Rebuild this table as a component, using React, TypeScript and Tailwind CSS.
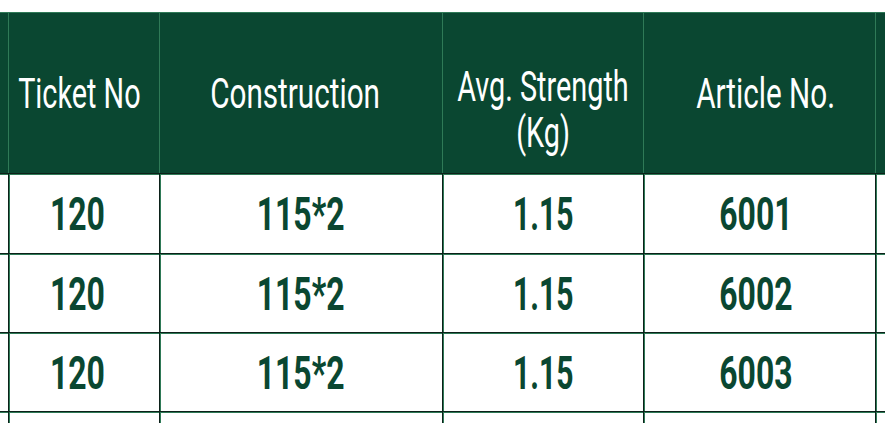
import React from "react";

const cols = "grid-cols-[8px_151px_283px_201px_232px_1fr]";

function HCell({ children, className = "" }: { children?: React.ReactNode; className?: string }) {
  return (
    <div className={`flex items-center justify-center border-l border-[#2f7a57] text-white ${className}`}>
      {children}
    </div>
  );
}

function Cond({ children, className = "" }: { children: React.ReactNode; className?: string }) {
  return <span className={`inline-block whitespace-nowrap ${className}`}>{children}</span>;
}

const rows = [
  ["120", "115*2", "1.15", "6001"],
  ["120", "115*2", "1.15", "6002"],
  ["120", "115*2", "1.15", "6003"],
];

export default function App() {
  return (
    <div className="w-[885px] h-[423px] overflow-hidden bg-white pt-[12px] font-['Roboto',sans-serif]">
      <div className={`grid ${cols} h-[161px] bg-[#0a4731] border-t border-[#2f7a57]`}>
        <div />
        <HCell className="pr-[9px]">
          <Cond className="text-[43px] font-normal leading-none scale-x-[0.67]">Ticket No</Cond>
        </HCell>
        <HCell className="pr-[11px]">
          <Cond className="text-[43px] font-normal leading-none scale-x-[0.69]">Construction</Cond>
        </HCell>
        <HCell>
          <div className="flex flex-col items-center text-[43px] leading-[46px] mt-[32px]">
            <Cond className="scale-x-[0.67]">Avg. Strength</Cond>
            <Cond className="scale-x-[0.67]">(Kg)</Cond>
          </div>
        </HCell>
        <HCell className="pl-[12px]">
          <Cond className="text-[43px] font-normal leading-none scale-x-[0.69]">Article No.</Cond>
        </HCell>
        <HCell />
      </div>
      {rows.map((r, i) => (
        <div
          key={i}
          className={`grid ${cols} ${i === 0 ? "h-[80px]" : "h-[79px]"} border-t border-[#0c2119] shadow-[inset_0_1px_0_#2f7a57]`}
        >
          <div />
          {r.map((v, j) => (
            <div
              key={j}
              className={`flex items-center justify-center border-l border-[#0c2119] shadow-[inset_1px_0_0_#2f7a57] text-[#0a4731] ${
                j === 0 ? "pr-[13px]" : j === 3 ? "pr-[8px]" : ""
              }`}
            >
              <Cond className={`text-[47px] font-bold leading-none ${j === 2 ? "scale-x-[0.64]" : "scale-x-[0.68]"}`}>{v}</Cond>
            </div>
          ))}
          <div className="border-l border-[#0c2119] shadow-[inset_1px_0_0_#2f7a57]" />
        </div>
      ))}
      <div className={`grid ${cols} h-[20px] border-t border-[#0c2119] shadow-[inset_0_1px_0_#2f7a57]`}>
        <div />
        <div className="border-l border-[#0c2119] shadow-[inset_1px_0_0_#2f7a57]" />
        <div className="border-l border-[#0c2119] shadow-[inset_1px_0_0_#2f7a57]" />
        <div className="border-l border-[#0c2119] shadow-[inset_1px_0_0_#2f7a57]" />
        <div className="border-l border-[#0c2119] shadow-[inset_1px_0_0_#2f7a57]" />
        <div className="border-l border-[#0c2119] shadow-[inset_1px_0_0_#2f7a57]" />
      </div>
    </div>
  );
}
